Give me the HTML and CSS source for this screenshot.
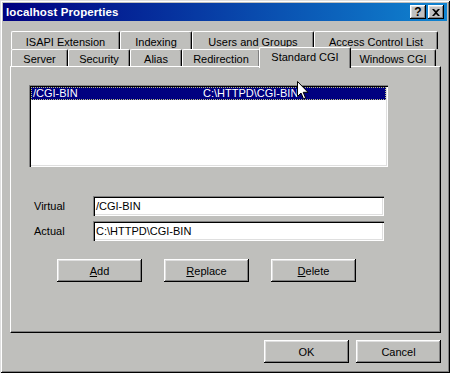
FILE: index.html
```html
<!DOCTYPE html>
<html>
<head>
<meta charset="utf-8">
<title>localhost Properties</title>
<link rel="stylesheet" href="styles.css">
</head>
<body>
<div class="window">
  <div class="titlebar">
    <span class="title">localhost Properties</span>
    <div class="caps">
      <div class="cap help">?</div>
      <div class="cap close">
        <svg width="8" height="7" viewBox="0 0 8 7"><path d="M0 0h2l2 2 2-2h2L5 3.5 8 7H6L4 5 2 7H0l3-3.5z" fill="#000"/></svg>
      </div>
    </div>
  </div>
  <div class="content">
    <div class="tabs">
      <div class="tabrow back">
        <div class="tab w-isapi">ISAPI Extension</div>
        <div class="tab w-index">Indexing</div>
        <div class="tab w-users">Users and Groups</div>
        <div class="tab w-acl">Access Control List</div>
      </div>
      <div class="tabrow front">
        <div class="tab w-server">Server</div>
        <div class="tab w-security">Security</div>
        <div class="tab w-alias">Alias</div>
        <div class="tab w-redir">Redirection</div>
        <div class="tab selected w-std">Standard CGI</div>
        <div class="tab w-win">Windows CGI</div>
      </div>
    </div>
    <div class="panel">
      <div class="list">
        <div class="row sel">
          <span class="col1">/CGI-BIN</span>
          <span class="col2">C:\HTTPD\CGI-BIN</span>
        </div>
      </div>
      <div class="fields">
        <div class="field">
          <span class="label">Virtual</span>
          <div class="input">/CGI-BIN</div>
        </div>
        <div class="field">
          <span class="label">Actual</span>
          <div class="input">C:\HTTPD\CGI-BIN</div>
        </div>
      </div>
      <div class="actions">
        <div class="btn"><u>A</u>dd</div>
        <div class="btn"><u>R</u>eplace</div>
        <div class="btn"><u>D</u>elete</div>
      </div>
    </div>
    <div class="footer">
      <div class="btn">OK</div>
      <div class="btn">Cancel</div>
    </div>
  </div>
  <svg class="cursor" width="12" height="19" viewBox="0 0 12 19">
    <path d="M0.5 0.5 L0.5 15.5 L4 12 L6.5 17.8 L8.6 16.9 L6.2 11.3 L11 11.3 Z" fill="#fff" stroke="#000" stroke-width="1"/>
  </svg>
</div>
</body>
</html>
```

FILE: styles.css
```css
* { box-sizing: border-box; }

html, body {
  margin: 0;
  padding: 0;
  background: #bfbfbc;
}

body {
  font-family: "Liberation Sans", Arial, sans-serif;
  font-size: 11px;
  color: #000;
}

.window {
  position: relative;
  width: 450px;
  height: 373px;
  padding: 3px;
  background: #bfbfbc;
  box-shadow: inset 1px 1px #dfdfdf, inset -1px -1px #000, inset 2px 2px #fff, inset -2px -2px #808080;
}

.titlebar {
  height: 18px;
  display: flex;
  align-items: center;
  justify-content: space-between;
  padding: 0 3px 0 3px;
  background: linear-gradient(to right, #000080, #1084d0);
}

.title {
  color: #fff;
  font-weight: bold;
  font-size: 11.5px;
  letter-spacing: 0.1px;
}

.caps {
  display: flex;
  gap: 2px;
}

.cap {
  width: 16px;
  height: 14px;
  background: #c0c0c0;
  display: flex;
  align-items: center;
  justify-content: center;
  font-weight: bold;
  font-size: 12px;
  line-height: 14px;
  box-shadow: inset -1px -1px #000, inset 1px 1px #fff, inset -2px -2px #808080, inset 2px 2px #dfdfdf;
}

.content {
  padding: 10px 6px 0 7px;
}

.tabs {
  padding-left: 1px;
}

.tabrow {
  display: flex;
}

.tabrow.back {
  height: 18px;
}

.tabrow.front {
  height: 17px;
}

.tab {
  height: 100%;
  border-top: 1px solid #fff;
  border-left: 1px solid #fff;
  border-right: 1px solid #000;
  border-radius: 2px 2px 0 0;
  box-shadow: inset -1px 0 #808080;
  text-align: center;
  padding-top: 3px;
  line-height: 13px;
  white-space: nowrap;
  background: #bfbfbc;
}

.back .tab { padding-top: 4px; }

.w-isapi { width: 109px; }
.w-index { width: 72px; }
.w-users { width: 122px; }
.w-acl { width: 124px; }

.w-server { width: 57px; }
.w-security { width: 62px; }
.w-alias { width: 52px; }
.w-redir { width: 78px; }
.w-std { width: 92px; }
.w-win { width: 86px; }

.tab.selected {
  position: relative;
  z-index: 2;
  height: 21px;
  margin-top: -2px;
  margin-left: -1px;
  margin-right: -1px;
  padding-top: 3px;
}

.panel {
  height: 267px;
  border-top: 1px solid #fff;
  border-left: 1px solid #fff;
  border-right: 1px solid #000;
  border-bottom: 1px solid #000;
  box-shadow: inset -1px -1px #808080;
  padding: 18px 0 0 18px;
}

.list {
  width: 359px;
  height: 82px;
  background: #fff;
  padding: 2px;
  box-shadow: inset 1px 1px #808080, inset 2px 2px #000, inset -1px -1px #fff, inset -2px -2px #dfdfdf;
}

.row {
  height: 13px;
  display: flex;
  line-height: 13px;
  padding-left: 2px;
}

.row.sel {
  background: #000080;
  color: #fff;
  outline: 1px dotted #bfbf80;
  outline-offset: -1px;
}

.col1 { width: 170px; }

.fields {
  margin-top: 29px;
  display: flex;
  flex-direction: column;
  gap: 5px;
}

.field {
  display: flex;
  align-items: center;
}

.label {
  width: 64px;
  padding-left: 5px;
}

.input {
  width: 291px;
  height: 20px;
  background: #fff;
  padding: 3px 0 0 3px;
  line-height: 14px;
  box-shadow: inset 1px 1px #808080, inset 2px 2px #000, inset -1px -1px #fff, inset -2px -2px #dfdfdf;
}

.actions {
  display: flex;
  gap: 22px;
  margin-top: 18px;
  padding-left: 28px;
}

.btn {
  width: 85px;
  height: 23px;
  display: flex;
  align-items: center;
  justify-content: center;
  background: #bfbfbc;
  box-shadow: inset -1px -1px #000, inset 1px 1px #fff, inset -2px -2px #808080, inset 2px 2px #dfdfdf;
}

.btn u { text-decoration: underline; text-underline-offset: 1px; }

.footer {
  display: flex;
  justify-content: flex-end;
  gap: 7px;
  margin-top: 7px;
  padding-right: 0;
}

.cursor {
  position: absolute;
  left: 297px;
  top: 81px;
}
```
